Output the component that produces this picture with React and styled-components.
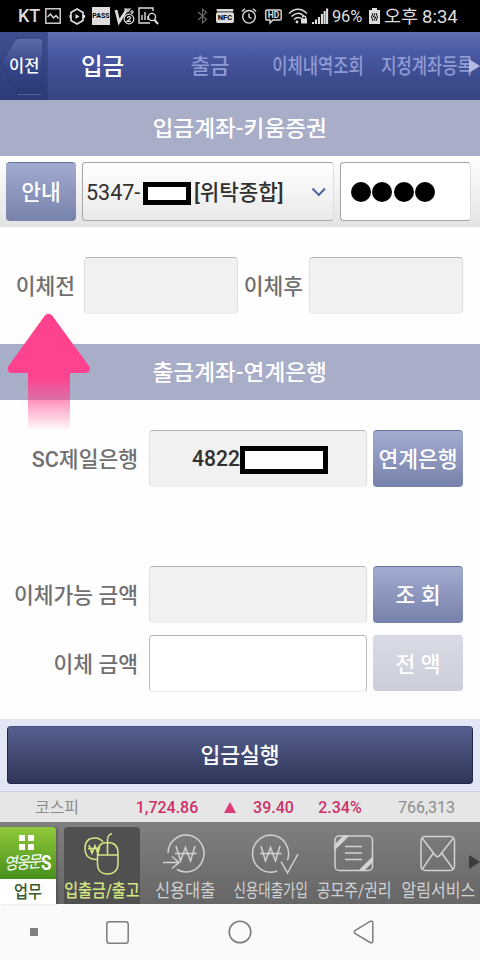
import React from "react";
import styled, { createGlobalStyle } from "styled-components";

export default function App() {
    return (
        <>
            <GlobalStyle />
            <Tela>
                <StatusBar />
                <Menu>
                    <Voltar>
                        <svg width="48" height="68" viewBox="0 0 48 68">
                            <defs>
                                <linearGradient id="voltar" x1="0" y1="0" x2="0" y2="1">
                                    <stop offset="0" stopColor="#5f6ba9" />
                                    <stop offset="0.500" stopColor="#36458a" />
                                    <stop offset="1" stopColor="#2b3973" />
                                </linearGradient>
                            </defs>
                            <path d="M1 31 L14 9 Q17 6 20 6 H40 Q43 6 43 9 V60 Q43 62.500 40 62.500 H20 Q17 62 14 58 Z" fill="url(#voltar)" stroke="#2f3c78" strokeWidth="1" />
                            <path d="M18 62.500 H41" stroke="#5d6aa3" strokeWidth="0.800" />
                        </svg>
                        <TextoVoltar>이전</TextoVoltar>
                    </Voltar>
                    <Aba $w={109} $ativa><Texto $size={23.5} $weight={500}>입금</Texto></Aba>
                    <Aba $w={106}><Texto $size={21} $weight={500}>출금</Texto></Aba>
                    <Aba $w={110}><Texto $size={21} $x={0.79} $weight={500}>이체내역조회</Texto></Aba>
                    <Aba $w={107}><Texto $size={21} $x={0.79} $weight={500}>지정계좌등록</Texto></Aba>
                    <Seta width="11" height="14" viewBox="0 0 11 14">
                        <path d="M0 0 L11 7 L0 14 Z" fill="#b3bbe2" />
                    </Seta>
                </Menu>

                <Titulo><Texto $size={22} $weight={500} $x={1.03}>입금계좌-키움증권</Texto></Titulo>
                <LinhaConta>
                    <Botao $w={70} $h={59}><Texto $size={21.5} $weight={500}>안내</Texto></Botao>
                    <Seletor>
                        <Conta><Texto $size={21.5} $weight={400} $origin="left">5347-</Texto></Conta>
                        <Tarja $w={48} $h={23} />
                        <Tipo><Texto $size={21.5} $weight={500} $x={0.985} $origin="left">[위탁종합]</Texto></Tipo>
                        <Chevron width="16" height="10" viewBox="0 0 16 10">
                            <path d="M1.500 1.500 L7.800 8 L14 1.500" fill="none" stroke="#53639f" strokeWidth="2" />
                        </Chevron>
                    </Seletor>
                    <Senha>
                        <Ponto /><Ponto /><Ponto /><Ponto />
                    </Senha>
                </LinhaConta>

                <LinhaSaldo>
                    <Rotulo $w={78} $pr={3}>이체전</Rotulo>
                    <Campo $w={154} />
                    <Rotulo $w={59} $pr={0}>이체후</Rotulo>
                    <Campo $w={154} />
                </LinhaSaldo>

                <Titulo>
                    <Texto $size={22} $weight={500} $x={1.03}>출금계좌-연계은행</Texto>
                    <SetaRosa width="84" height="118" viewBox="0 0 84 118">
                        <defs>
                            <linearGradient id="rosa" x1="0" y1="0" x2="0" y2="1">
                                <stop offset="0" stopColor="#ff428d" />
                                <stop offset="0.120" stopColor="#ff428d" stopOpacity="0.950" />
                                <stop offset="1" stopColor="#ff428d" stopOpacity="0" />
                            </linearGradient>
                        </defs>
                        <rect x="21" y="59" width="42" height="59" fill="url(#rosa)" />
                        <path d="M37.500 3 Q41.500 -1.500 45.500 3 L82 53 Q84.500 59 79 60 H4 Q-1 59 1.500 53 Z" fill="#ff428d" />
                    </SetaRosa>
                </Titulo>

                <Formulario>
                    <Linha $mt={30}>
                        <Rotulo $w={141} $pr={5}>SC제일은행</Rotulo>
                        <Campo $w={218}>
                            <Quatro><Texto $size={22} $weight={500} $x={0.96} $origin="right">4822</Texto></Quatro>
                            <Tarja $w={88} $h={28} />
                        </Campo>
                        <Botao $w={90} $h={57}><Texto $size={21.5} $weight={500}>연계은행</Texto></Botao>
                    </Linha>
                    <Linha $mt={79}>
                        <Rotulo $w={141} $pr={5}>이체가능 금액</Rotulo>
                        <Campo $w={218} />
                        <Botao $w={90} $h={57}><Texto $size={21.5} $weight={500}>조 회</Texto></Botao>
                    </Linha>
                    <Linha $mt={12}>
                        <Rotulo $w={141} $pr={5}>이체 금액</Rotulo>
                        <Campo $w={218} $branco />
                        <Botao $w={90} $h={56} $inativo><Texto $size={21.5} $weight={500}>전 액</Texto></Botao>
                    </Linha>
                </Formulario>

                <Rodape>
                    <Executar><Texto $size={21.5} $weight={500}>입금실행</Texto></Executar>
                </Rodape>

                <Cotacao>
                    <Valor $w={114}><Texto $size={16}>코스피</Texto></Valor>
                    <Valor $w={106} $alta>1,724.86</Valor>
                    <Valor $w={20}>
                        <svg width="12" height="11" viewBox="0 0 12 11"><path d="M6 0 L12 11 H0 Z" fill="#dc3b79" /></svg>
                    </Valor>
                    <Valor $w={67} $alta>39.40</Valor>
                    <Valor $w={66} $alta>2.34%</Valor>
                    <Valor $w={107}>766,313</Valor>
                </Cotacao>

                <Atalhos />

                <NavSistema>
                    <svg width="8" height="8"><rect width="8" height="8" fill="#808080" /></svg>
                    <svg width="23" height="23" viewBox="0 0 23 23"><rect x="0.800" y="0.800" width="21.400" height="21.400" rx="2.500" fill="none" stroke="#7d7d7d" strokeWidth="1.500" /></svg>
                    <svg width="24" height="24" viewBox="0 0 24 24"><circle cx="12" cy="12" r="10.800" fill="none" stroke="#7d7d7d" strokeWidth="1.600" /></svg>
                    <svg width="21" height="24" viewBox="0 0 21 24"><path d="M17.500 1.200 L2 10.500 Q0.500 12 2 13.500 L17.500 22.700 Q19.800 23.200 19.800 21 V3 Q19.800 0.800 17.500 1.200 Z" fill="none" stroke="#7d7d7d" strokeWidth="1.500" /></svg>
                </NavSistema>
            </Tela>
        </>
    );
}

function StatusBar() {
    return (
        <Status>
            <Operadora>KT</Operadora>
            <Icone $ml={5} width="16" height="16" viewBox="0 0 16 16" fill="none" stroke="#ddd" strokeWidth="1.400">
                <rect x="0.800" y="0.800" width="14.400" height="14.400" />
                <path d="M2.500 9 L5.500 6 L8.500 10 L11 7.500 L13.500 10.500" />
            </Icone>
            <Icone $ml={8} width="16" height="17" viewBox="0 0 16 17" fill="none" stroke="#ddd" strokeWidth="1.700">
                <path d="M8 1 L14 4.500 V12.500 L8 16 L2 12.500 V4.500 Z" />
                <path d="M6.500 6 L10.500 8.500 L6.500 11 Z" fill="#ddd" stroke="none" />
                <path d="M0.500 8.500 H2 M14 8.500 H16" strokeWidth="3" />
            </Icone>
            <Pass>PASS</Pass>
            <Icone $ml={4} width="21" height="17" viewBox="0 0 21 17" fill="none" stroke="#ddd" strokeWidth="1.200">
                <path d="M2 2 L5 14 L13 1.500" strokeWidth="2.800" />
                <path d="M10 1.200 H16 L13.500 4.500" />
                <circle cx="15" cy="11" r="4.800" />
                <path d="M13.200 9.800 Q15 7.500 16.700 9.700 Q16.500 11 13.200 13.300 H17" />
                <path d="M16 4 H20 M18 2 V6" />
            </Icone>
            <Icone $ml={3} width="21" height="18" viewBox="0 0 21 18" fill="none" stroke="#ddd" strokeWidth="1.400">
                <path d="M15 4 V1 H1 V16 H12" />
                <path d="M4 13 V8 M7 13 V5 M10 13 V9" />
                <circle cx="14" cy="10" r="3.600" />
                <path d="M16.500 13 L20 17" strokeWidth="2" />
            </Icone>
            <Icone $ml={38} width="11" height="16" viewBox="0 0 11 16" fill="none" stroke="#666" strokeWidth="1.200">
                <path d="M1 4 L9.500 11.500 L5.500 15 V1 L9.500 4.500 L1 12" />
            </Icone>
            <Icone $ml={8} width="18" height="14" viewBox="0 0 18 14">
                <rect width="17" height="2.400" x="0.500" rx="1" fill="#ddd" />
                <rect y="3.300" width="18" height="10.700" rx="2" fill="#ddd" />
                <text x="9" y="11.200" fontSize="7.500" fontWeight="700" textAnchor="middle" fill="#000">NFC</text>
            </Icone>
            <Icone $ml={7} width="16" height="16" viewBox="0 0 16 16" fill="none" stroke="#ddd" strokeWidth="1.400">
                <circle cx="8" cy="8.800" r="6.300" />
                <path d="M8 5.500 V9 L10.500 10.500 M0.800 3.500 L4 0.800 M15.200 3.500 L12 0.800" />
            </Icone>
            <Icone $ml={8} width="17" height="15" viewBox="0 0 17 15">
                <path d="M2 1 H15 Q16.200 1 16.200 2.200 V9.800 Q16.200 11 15 11 H8 L5 14 V11 H2 Q0.800 11 0.800 9.800 V2.200 Q0.800 1 2 1 Z" fill="none" stroke="#ddd" strokeWidth="1.400" />
                <text x="8.500" y="9" fontSize="8.500" fontWeight="700" textAnchor="middle" fill="#ddd">HD</text>
            </Icone>
            <Icone $ml={6} width="20" height="17" viewBox="0 0 20 17" fill="none" stroke="#ddd" strokeWidth="1.500">
                <path d="M1 5.500 Q10 -3 19 5.500 M3.500 8.500 Q10 2.200 16 8 M6 11.500 Q9.500 8 13 10.500" />
                <circle cx="9" cy="14" r="1.400" fill="#ddd" stroke="none" />
                <rect x="13" y="10.500" width="6" height="5" fill="#ddd" stroke="none" />
                <path d="M14.300 11 V9 Q16 7.200 17.700 9 V11" strokeWidth="1.100" />
            </Icone>
            <Icone $ml={4} width="16" height="16" viewBox="0 0 16 16" stroke="#ddd" strokeWidth="2.100">
                <path d="M1 16 V14 M4 16 V11.500 M7 16 V9 M10 16 V6 M12.600 16 V3 M15.100 16 V0.500" />
            </Icone>
            <Porcentagem>96%</Porcentagem>
            <Icone $ml={6} width="11" height="16" viewBox="0 0 11 16">
                <path d="M3 0 H8 V2 H11 V16 H0 V2 H3 Z" fill="#ddd" />
                <path d="M4 5 Q1 9 4 13 M7 5 Q10 9 7 13 M6 5.500 L4.300 9 H6.800 L5 12.500" fill="none" stroke="#000" strokeWidth="1" />
            </Icone>
            <Hora><span>오후</span><span>8:34</span></Hora>
        </Status>
    );
}

function Won({ children }) {
    return (
        <Desenho width="48" height="42" viewBox="0 0 48 42">
            {children}
            <path d="M14 13 L18.500 28 L23.500 14.500 L28.500 28 L33 13 M13 20.500 H34.500" strokeWidth="1.500" />
        </Desenho>
    );
}

function Atalhos() {
    return (
        <BarraAtalhos>
            <Logo>
                <LogoVerde>
                    <Quadrados><i /><i /><i /><i /></Quadrados>
                    <Marca><em>영웅문</em><b>S</b></Marca>
                </LogoVerde>
                <LogoTexto><Texto $size={17.5} $weight={500} $x={0.87}>업무</Texto></LogoTexto>
            </Logo>
            <Atalho $w={76} $ml={8} $ativo>
                <Desenho width="38" height="42" viewBox="0 0 38 42">
                    <path d="M14 26.500 Q2 26.500 2 15.500 Q2 5 12 5 Q17 5 20 9" />
                    <path d="M6 12 L9 20 L12 13 L15 20 L16.500 14 M5 15.500 H16" strokeWidth="1.700" />
                    <path d="M24.500 9.500 C33 9.500 35 15 35 20 V31 C35 37 31 41 24.500 41 C18 41 14.500 37 14.500 31 V20 C14.500 14 17 9.500 24.500 9.500 Z M14.500 22 H35 M24.500 22 V8 Q24 2 29 0.500" />
                </Desenho>
                <Texto $size={18} $x={0.84} $weight={500}>입출금/출고</Texto>
            </Atalho>
            <Atalho $w={91}>
                <Won>
                    <path d="M6 20 A18 18.500 0 1 1 15 36.500" />
                    <path d="M1 29.500 H16 M10 23.500 L17 29.500 L10 35.500" />
                </Won>
                <Texto $size={18} $x={0.91}>신용대출</Texto>
            </Atalho>
            <Atalho $w={79}>
                <Won>
                    <path d="M30 38 A18 18.500 0 1 1 40.500 27" />
                    <path d="M34 28.500 L40.500 40 L51 21" />
                </Won>
                <Texto $size={18} $x={0.75}>신용대출가입</Texto>
            </Atalho>
            <Atalho $w={88}>
                <Desenho width="40" height="42" viewBox="0 0 40 42">
                    <rect x="1" y="3" width="37.500" height="34.500" rx="4" />
                    <path d="M1 16 L14 3 H10 L1 12 Z M38 25 L26 37 H30 L38 29 Z" fill="#d2d2d2" />
                    <path d="M11 13.500 H28 M11 20 H28 M11 26.500 H28" strokeWidth="1.500" />
                </Desenho>
                <Texto $size={18} $x={0.83}>공모주/권리</Texto>
            </Atalho>
            <Atalho $w={80}>
                <Desenho width="36" height="42" viewBox="0 0 36 42">
                    <rect x="1" y="3.500" width="33.500" height="34" rx="4" />
                    <path d="M2 5 L15 22 Q17.500 25.500 20 22 L33.500 5 M2 36.500 L13 20.500 M33.500 36.500 L22 20.500" />
                </Desenho>
                <Texto $size={18} $x={0.89}>알림서비스</Texto>
            </Atalho>
            <Proximo width="11" height="14" viewBox="0 0 11 14">
                <path d="M0 0 L11 7 L0 14 Z" fill="#3c3c3c" />
            </Proximo>
        </BarraAtalhos>
    );
}

const GlobalStyle = createGlobalStyle`
    * {
        box-sizing: border-box;
    }

    body {
        margin: 0;
        font-family: Roboto, "Noto Sans CJK KR", sans-serif;
    }

    svg {
        display: block;
        flex-shrink: 0;
    }
`;

const Tela = styled.div`
    width: 480px;
    height: 960px;
    overflow: hidden;
    background: #fefefe;
`;

const Texto = styled.span`
    display: inline-block;
    flex-shrink: 0;
    padding-top: 2px;
    font-size: ${(p) => p.$size}px;
    font-weight: ${(p) => p.$weight || 400};
    line-height: 1.2;
    white-space: nowrap;
    transform: scaleX(${(p) => p.$x || 1});
    transform-origin: ${(p) => p.$origin || "center"};
`;

const Status = styled.div`
    height: 32px;
    padding-left: 18px;

    display: flex;
    align-items: center;

    background: #000000;
    color: #dddddd;
`;

const Operadora = styled.span`
    width: 22px;
    font-size: 18px;
    font-weight: 500;
    line-height: 32px;
`;

const Icone = styled.svg`
    margin-left: ${(p) => p.$ml}px;
    overflow: visible;
`;

const Pass = styled.span`
    width: 18px;
    height: 18px;
    margin-left: 7px;

    display: flex;
    justify-content: center;
    align-items: center;

    background: #dddddd;
    color: #000000;
    font-size: 7px;
    font-weight: 700;
`;

const Porcentagem = styled.span`
    width: 31px;
    margin-left: 4px;
    padding-top: 1px;
    font-size: 16.5px;
    letter-spacing: -0.2px;
`;

const Hora = styled.span`
    margin-left: 4px;
    padding-top: 1px;
    display: flex;
    align-items: center;
    gap: 4px;
    font-size: 18.5px;
    line-height: 32px;
    white-space: nowrap;
`;

const Menu = styled.nav`
    position: relative;
    height: 68px;
    display: flex;
    background: linear-gradient(#636fb4 0%, #4a59a4 30%, #3c4b8d 70%, #394683 100%);
`;

const Voltar = styled.div`
    position: relative;
    width: 48px;
    background: linear-gradient(#414f92, #2d3b77);
`;

const TextoVoltar = styled.span`
    position: absolute;
    top: 22px;
    left: 9px;
    color: #ffffff;
    font-size: 16.5px;
    font-weight: 500;
    line-height: 26px;
    white-space: nowrap;
`;

const Aba = styled.div`
    width: ${(p) => p.$w}px;

    display: flex;
    justify-content: center;
    align-items: center;

    color: ${(p) => (p.$ativa ? "#ffffff" : "#8f9bd3")};
`;

const Seta = styled.svg`
    position: absolute;
    top: 27px;
    right: 0;
`;

const Titulo = styled.h2`
    position: relative;
    height: 56px;
    margin: 0;

    display: flex;
    justify-content: center;
    align-items: center;

    background: #a8adc8;
    color: #ffffff;
`;

const LinhaConta = styled.div`
    height: 71px;
    padding: 6px;

    display: flex;
    gap: 6px;

    background: linear-gradient(#ffffff, #e3e3e3);
`;

const Botao = styled.button`
    width: ${(p) => p.$w}px;
    height: ${(p) => p.$h}px;
    padding: 0;
    flex-shrink: 0;

    display: flex;
    justify-content: center;
    align-items: center;

    border: 0;
    border-top: 1px solid ${(p) => (p.$inativo ? "#cfd2df" : "#68749e")};
    border-radius: 4px;
    background: ${(p) => (p.$inativo ? "linear-gradient(#d8dae5, #cbcdda)" : "linear-gradient(#a2abd0, #7782ab)")};
    color: #ffffff;
    font-family: inherit;
`;

const Seletor = styled.div`
    width: 252px;
    height: 59px;
    padding-left: 3px;

    display: flex;
    align-items: center;

    border: 1px solid #a5a5a5;
    border-right-color: #dddddd;
    border-radius: 4px;
    background: linear-gradient(#ffffff, #e9e9e9);
    color: #303030;
`;

const Conta = styled.span`
    width: 57px;
    flex-shrink: 0;
`;

const Tipo = styled.span`
    margin-left: 3px;
`;

const Tarja = styled.span`
    width: ${(p) => p.$w}px;
    height: ${(p) => p.$h}px;
    margin-top: 3px;
    flex-shrink: 0;
    border: 5px solid #000000;
    background: #ffffff;
`;

const Chevron = styled.svg`
    margin: 0 6px 0 auto;
`;

const Senha = styled.div`
    width: 131px;
    height: 59px;
    padding-left: 10px;

    display: flex;
    align-items: center;
    gap: 1.3px;

    border: 1px solid #a5a5a5;
    border-right-color: #dddddd;
    border-radius: 4px;
    background: #ffffff;
`;

const Ponto = styled.span`
    width: 20px;
    height: 20px;
    border-radius: 50%;
    background: #000000;
`;

const LinhaSaldo = styled.div`
    height: 117px;
    padding-top: 30px;
    display: flex;
    gap: 6px;
`;

const Rotulo = styled.label`
    width: ${(p) => p.$w}px;
    height: 57px;
    padding-top: 2px;
    padding-right: ${(p) => p.$pr}px;
    flex-shrink: 0;

    display: flex;
    justify-content: flex-end;
    align-items: center;

    color: #707070;
    font-size: 21.5px;
    font-weight: 500;
    line-height: 1.2;
    white-space: nowrap;
`;

const Campo = styled.div`
    width: ${(p) => p.$w}px;
    height: 57px;

    display: flex;
    justify-content: center;
    align-items: center;

    border: 1px solid ${(p) => (p.$branco ? "#bdbdbd" : "#dedede")};
    border-top-color: #b5b5b5;
    border-bottom-color: #eeeeee;
    border-radius: 4px;
    background: ${(p) => (p.$branco ? "#ffffff" : "#f1f1f1")};
    color: #303030;
`;

const Quatro = styled.span`
    width: 50px;
    margin-left: 2px;

    display: flex;
    justify-content: flex-end;
`;

const SetaRosa = styled.svg`
    position: absolute;
    top: -31px;
    left: 7px;
    z-index: 1;
`;

const Formulario = styled.div`
    height: 319px;
`;

const Linha = styled.div`
    padding-top: ${(p) => p.$mt}px;
    padding-left: 2px;
    display: flex;
    gap: 6px;
`;

const Rodape = styled.div`
    height: 72px;
    padding: 7px;
    background: #e3e7f5;
`;

const Executar = styled.button`
    width: 466px;
    height: 58px;

    display: flex;
    justify-content: center;
    align-items: center;

    border: 1px solid #20274c;
    border-top-color: #454f80;
    border-radius: 4px;
    background: linear-gradient(#555f8e, #303658);
    color: #ffffff;
    font-family: inherit;
`;

const Cotacao = styled.div`
    height: 31px;
    display: flex;
    border-top: 1px solid #cdd1df;
    background: #e6e6e6;
`;

const Valor = styled.span`
    width: ${(p) => p.$w}px;

    display: flex;
    justify-content: center;
    align-items: center;

    color: ${(p) => (p.$alta ? "#cb3268" : "#8c8c8c")};
    font-size: 16px;
    font-weight: ${(p) => (p.$alta ? 500 : 400)};
`;

const BarraAtalhos = styled.div`
    position: relative;
    height: 82px;
    display: flex;
    background: linear-gradient(#7f7f7f, #666666);
`;

const Logo = styled.div`
    width: 56px;
    height: 77px;
    margin-top: 5px;
    border-radius: 0 4px 0 0;
    overflow: hidden;
    box-shadow: 2px 0 2px rgba(0, 0, 0, 0.2);
`;

const LogoVerde = styled.div`
    height: 52px;
    padding-top: 8px;

    display: flex;
    flex-direction: column;
    align-items: center;

    background: linear-gradient(#91c93b, #46901b);
`;

const Quadrados = styled.div`
    margin-left: -4px;
    display: grid;
    grid-template-columns: 6px 6px;
    gap: 3px;

    i {
        height: 6px;
        background: #ffffff;
    }
`;

const Marca = styled.div`
    margin-top: 3px;

    display: flex;
    align-items: center;
    gap: 1px;

    color: #ffffff;
    line-height: 21px;

    em {
        font-size: 15px;
        letter-spacing: -2px;
        transform: scaleY(1.1) rotate(-4deg);
    }

    b {
        font-size: 20px;
        transform: scaleX(0.85);
    }
`;

const LogoTexto = styled.div`
    height: 25px;

    display: flex;
    justify-content: center;
    align-items: center;

    background: #ffffff;
    color: #36572a;
`;

const Atalho = styled.div`
    width: ${(p) => p.$w}px;
    height: 77px;
    margin-top: 5px;
    margin-left: ${(p) => p.$ml || 0}px;
    padding-top: 6px;

    display: flex;
    flex-direction: column;
    align-items: center;
    gap: 3px;

    border-radius: 4px 4px 0 0;
    background: ${(p) => (p.$ativo ? "#505050" : "transparent")};
    color: ${(p) => (p.$ativo ? "#d3e683" : "#d2d2d2")};
`;

const Desenho = styled.svg`
    overflow: visible;
    fill: none;
    stroke: currentColor;
    stroke-width: 1.5;
`;

const Proximo = styled.svg`
    position: absolute;
    top: 33px;
    right: 0;
`;

const NavSistema = styled.div`
    height: 56px;
    padding: 0 105px 0 30px;

    display: grid;
    grid-template-columns: 76px 122px 125px 22px;
    align-items: center;

    background: #fafafa;
`;
